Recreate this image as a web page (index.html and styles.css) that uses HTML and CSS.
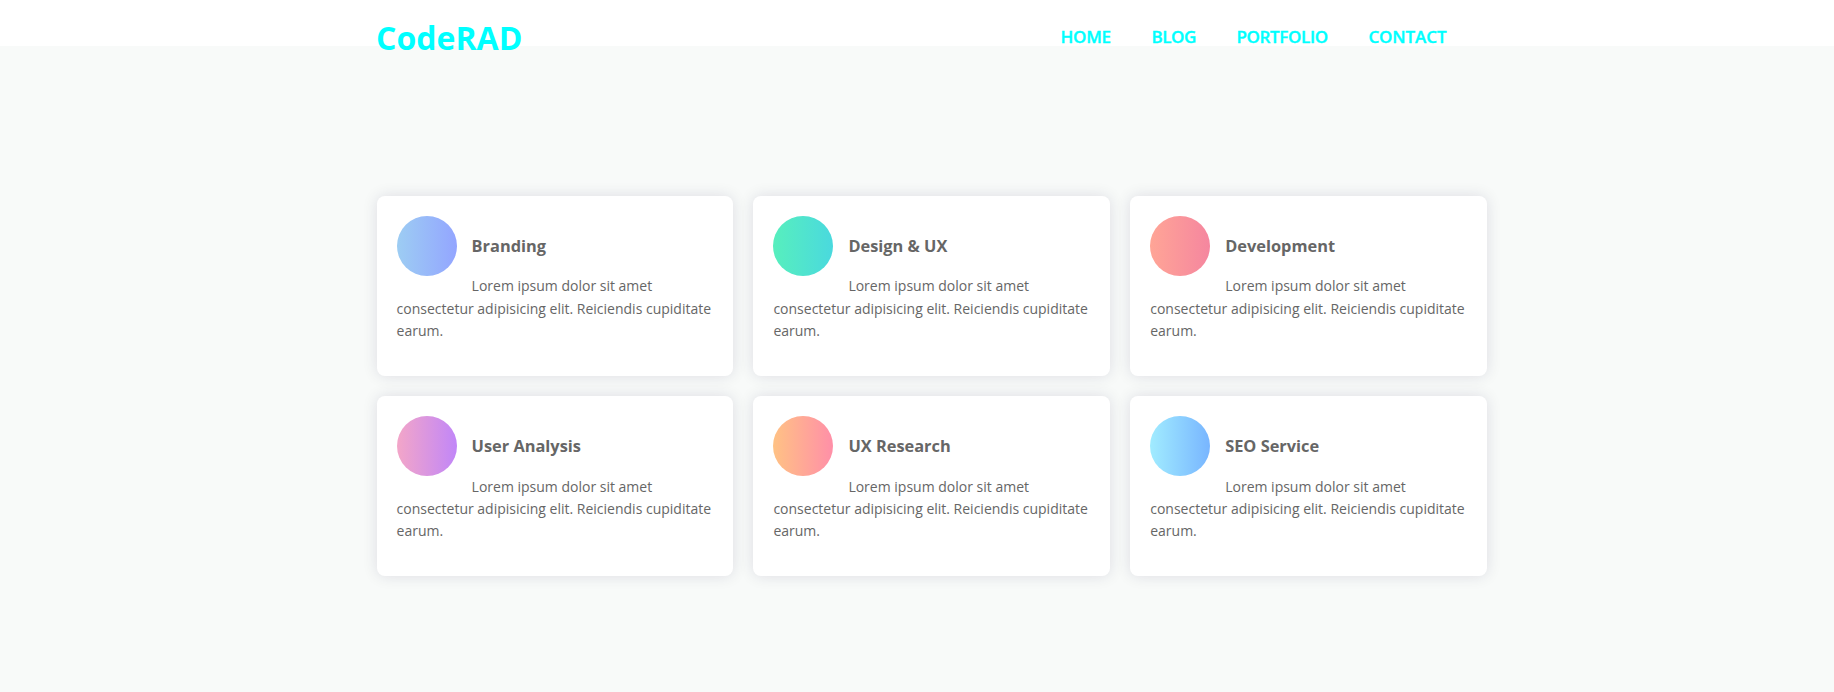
FILE: index.html
```html
<!DOCTYPE html>
<html lang="en">
<head>
<meta charset="utf-8">
<title>CodeRAD</title>
<link rel="stylesheet" href="styles.css">
</head>
<body>
<header class="header">
  <div class="header-inner">
    <a class="logo">CodeRAD</a>
    <nav class="nav">
      <a class="home">HOME</a>
      <a class="blog">BLOG</a>
      <a class="portfolio">PORTFOLIO</a>
      <a class="contact">CONTACT</a>
    </nav>
  </div>
</header>
<main class="services">
  <section class="card">
    <div class="icon branding"></div>
    <h3>Branding</h3>
    <p>Lorem ipsum dolor sit amet consectetur adipisicing elit. Reiciendis cupiditate earum.</p>
  </section>
  <section class="card">
    <div class="icon design"></div>
    <h3>Design &amp; UX</h3>
    <p>Lorem ipsum dolor sit amet consectetur adipisicing elit. Reiciendis cupiditate earum.</p>
  </section>
  <section class="card">
    <div class="icon development"></div>
    <h3>Development</h3>
    <p>Lorem ipsum dolor sit amet consectetur adipisicing elit. Reiciendis cupiditate earum.</p>
  </section>
  <section class="card">
    <div class="icon analysis"></div>
    <h3>User Analysis</h3>
    <p>Lorem ipsum dolor sit amet consectetur adipisicing elit. Reiciendis cupiditate earum.</p>
  </section>
  <section class="card">
    <div class="icon research"></div>
    <h3>UX Research</h3>
    <p>Lorem ipsum dolor sit amet consectetur adipisicing elit. Reiciendis cupiditate earum.</p>
  </section>
  <section class="card">
    <div class="icon seo"></div>
    <h3>SEO Service</h3>
    <p>Lorem ipsum dolor sit amet consectetur adipisicing elit. Reiciendis cupiditate earum.</p>
  </section>
</main>
</body>
</html>
```
FILE: styles.css
```css
* { box-sizing: border-box; }

body {
  margin: 0;
  min-height: 692px;
  background: #f8faf9;
  color: #666;
  font: 14px/1.6 "Open Sans", sans-serif;
}

.header {
  height: 46px;
  background: #fff;
}

.header-inner {
  display: flex;
  justify-content: space-between;
  width: 1140.4px;
  margin: 0 0 0 346.6px;
  padding: 0 0 0 30px;
  color: #0ff;
}

.logo {
  padding-top: 12px;
  margin-left: -0.5px;
  font-size: 32px;
  font-weight: 700;
}

.nav {
  display: flex;
  gap: 40px;
  padding: 23px 39.6px 0 0;
  font-size: 17px;
  font-weight: 600;
  -webkit-text-stroke: 0.4px #0ff;
}

.nav a { white-space: nowrap; }
.home { width: 51px; letter-spacing: -0.2px; }
.blog { width: 45px; letter-spacing: -0.4px; }
.portfolio { width: 92px; letter-spacing: -0.35px; }
.contact { width: 79px; letter-spacing: -0.1px; }

.services {
  display: grid;
  grid-template-columns: repeat(3, 1fr);
  gap: 20px;
  width: 1110.4px;
  margin: 150.1px 0 0 376.6px;
}

.card {
  height: 180.17px;
  padding: 20px;
  border-radius: 8px;
  background: #fff;
  box-shadow: 0 0 15px rgba(28, 0, 68, 0.12);
}

.icon {
  float: left;
  width: 60px;
  height: 60px;
  margin-right: 15px;
  border-radius: 50%;
}

.card h3 {
  margin: 16.75px 0 1em;
  font-size: 1.17em;
  font-weight: 700;
}

.card p { margin: 0; }

.branding { background: linear-gradient(to right, #9dcdf3, #93a5ff); }
.design { background: linear-gradient(to right, #57efbd, #4ad9de); }
.development { background: linear-gradient(to right, #ffa596, #f5869f); }
.analysis { background: linear-gradient(to right, #f3a6c8, #c186f8); }
.research { background: linear-gradient(to right, #ffc284, #ff8fa8); }
.seo { background: linear-gradient(to right, #a1ecff, #78b5ff); }
```
